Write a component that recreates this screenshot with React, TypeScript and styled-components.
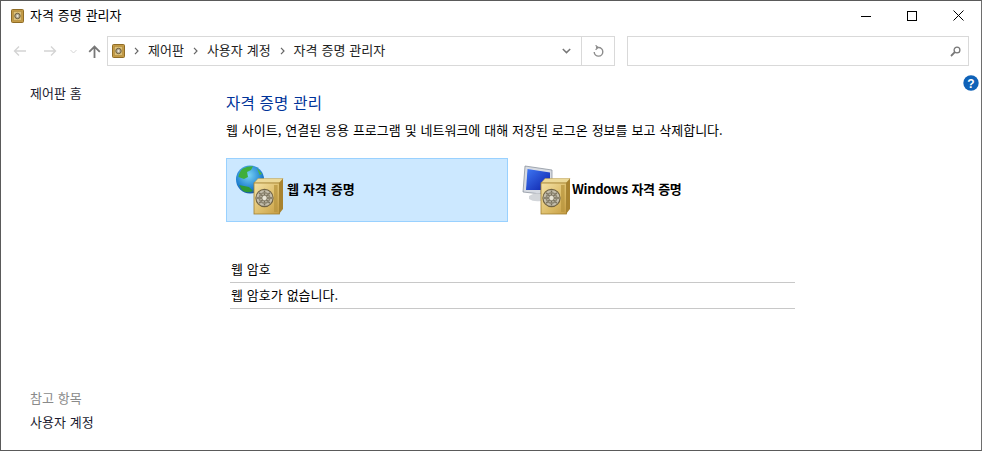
import React from "react";
import styled, { createGlobalStyle } from "styled-components";

const Global = createGlobalStyle`
  html, body { margin: 0; padding: 0; background: #fff; }
  body { font-family: "Noto Sans CJK KR", "Liberation Sans", sans-serif; font-size: 13px; word-spacing: 1px; color: #000; }
`;

const Window = styled.div`
  width: 982px; height: 451px; box-sizing: border-box;
  border: 1px solid #5a5a5a; border-right-color: #6e6e6e;
  display: flex; flex-direction: column; overflow: hidden; background: #fff;
`;
const TitleBar = styled.div`
  height: 29px; display: flex; align-items: center; padding-left: 10px; flex: none;
`;
const TitleText = styled.span`
  margin-left: 6px; line-height: 16px; flex: 1; padding-bottom: 2px;
`;
const CaptionBtn = styled.div`
  width: 46px; height: 29px; display: flex; align-items: center; justify-content: center;
`;
const NavBar = styled.div`
  height: 30px; margin-top: 6px; display: flex; align-items: center; flex: none; padding-left: 4px;
`;
const NavBtn = styled.div<{ $w: number }>`
  width: ${p => p.$w}px; height: 30px; display: flex; align-items: center; justify-content: center; flex: none;
`;
const AddressBox = styled.div`
  width: 508px; height: 30px; box-sizing: border-box;
  border: 1px solid #d9d9d9; display: flex; align-items: center; padding-left: 4px; flex: none;
`;
const Crumbs = styled.div`
  flex: 1; display: flex; align-items: center; color: #222; padding-bottom: 3px;
`;
const Sep = styled.span`
  width: 23px; display: flex; align-items: center; justify-content: center; flex: none; padding-top: 3px;
`;
const RefreshCell = styled.div`
  width: 32px; height: 100%; border-left: 1px solid #d9d9d9; display: flex; align-items: center; justify-content: center; margin-left: 10px;
`;
const SearchBox = styled.div`
  width: 342px; height: 30px; box-sizing: border-box; margin-left: 12px;
  border: 1px solid #d9d9d9; display: flex; align-items: center; justify-content: flex-end; padding-right: 7px; flex: none;
`;
const Body = styled.div`
  flex: 1; display: flex; position: relative; min-height: 0;
`;
const Side = styled.aside`
  width: 225px; flex: none; box-sizing: border-box; padding: 18px 0 19px 29px;
  display: flex; flex-direction: column;
`;
const SideLink = styled.div`
  color: #1a1a2e; line-height: 18px;
`;
const SeeAlso = styled.div`
  margin-top: auto; color: #8a8a8a; line-height: 18px; margin-bottom: 6px;
`;
const Main = styled.main`
  flex: 1; padding-top: 25px; min-width: 0;
`;
const Heading = styled.h1`
  margin: 0; font-size: 15.5px; font-weight: 400; color: #003399; line-height: 22px; letter-spacing: .2px;
`;
const Desc = styled.p`
  margin: 8px 0 0; line-height: 18px;
`;
const Tiles = styled.div`
  display: flex; margin-top: 19px;
`;
const Tile = styled.div<{ $active?: boolean }>`
  width: 282px; height: 64px; box-sizing: border-box; display: flex; align-items: center;
  padding-left: 8px;
  background: ${p => (p.$active ? "#cce8ff" : "transparent")};
  border: 1px solid ${p => (p.$active ? "#99d1ff" : "transparent")};
  font-weight: 700;
`;
const TileLabel = styled.span<{ $tight?: boolean }>`
  line-height: 18px; padding-bottom: 2px;
  letter-spacing: ${p => (p.$tight ? "-.35px" : "0")};
`;
const Section = styled.section`
  width: 565px; margin: 36px 0 0 4px;
`;
const Row = styled.div`
  height: 26px; box-sizing: border-box; border-bottom: 1px solid #c8c8c8; display: flex; align-items: center; padding: 0 0 2px 1px;
`;
const FirstRow = styled(Row)`
  height: 25px; padding-bottom: 4px;
`;
const HelpBadge = styled.div`
  position: absolute; top: 9px; right: 2px; width: 16px; height: 16px;
`;

const Safe = ({ w = 13 }: { w?: number }) => (
  <svg width={w} height={14} viewBox="0 0 13 14" style={{ flex: "none" }}>
    <rect x=".5" y=".5" width="12" height="13" rx="1" fill="#c49a45" stroke="#8f6c26" />
    <rect x="2.5" y="2.5" width="8" height="9" fill="#dcc07a" stroke="#b08d3f" strokeWidth=".6" />
    <circle cx="6.5" cy="7" r="2.7" fill="#b7ae97" stroke="#6b5c3a" />
    <circle cx="6.5" cy="7" r=".9" fill="#f0ead9" />
  </svg>
);

const BigSafe = () => (
  <g>
    <path d="M1 5 L5 0.5 H30 L27 5 Z" fill="#ecd998" stroke="#b99a4c" strokeWidth=".5" />
    <path d="M26 5 L30 .5 V31 L26 36 Z" fill="#a9832f" />
    <rect x="1" y="5" width="25.5" height="31" fill="url(#gold)" stroke="#a07f30" strokeWidth=".8" />
    <rect x="21" y="7" width="3.6" height="27" fill="#b8953f" opacity=".75" />
    <circle cx="11.5" cy="20" r="8.6" fill="#c4bead" stroke="#6f6245" strokeWidth="1.1" />
    <path d="M11.5 12.5V27.5M4 20H19M6.2 14.7L16.8 25.3M16.8 14.7L6.2 25.3" stroke="#77705c" strokeWidth="1.5" />
    <circle cx="11.5" cy="20" r="5.2" fill="none" stroke="#8e8773" strokeWidth="1.6" />
    <circle cx="11.5" cy="20" r="2.7" fill="#e8e4d6" stroke="#77705c" strokeWidth=".8" />
  </g>
);

const Defs = () => (
  <defs>
    <linearGradient id="gold" x1="0" y1="0" x2="1" y2="1">
      <stop offset="0" stopColor="#f4e2a6" />
      <stop offset=".6" stopColor="#dcbc68" />
      <stop offset="1" stopColor="#c59b42" />
    </linearGradient>
    <radialGradient id="sea" cx=".45" cy=".35" r=".75">
      <stop offset="0" stopColor="#7ad4f4" />
      <stop offset=".65" stopColor="#1f7fd0" />
      <stop offset="1" stopColor="#123f86" />
    </radialGradient>
    <linearGradient id="scr" x1="0" y1="0" x2="1" y2="1">
      <stop offset="0" stopColor="#3f78f4" />
      <stop offset="1" stopColor="#0c1fa8" />
    </linearGradient>
  </defs>
);

const WebIcon = () => (
  <svg width="52" height="52" viewBox="0 0 52 52" style={{ flex: "none" }}>
    <Defs />
    <circle cx="15" cy="15.5" r="14" fill="url(#sea)" />
    <path d="M8 4.5 Q13 2 18 2.2 L16 6 L12 8 L13 13 L9 15 L3.5 13 Q4 8 8 4.5 Z" fill="#3fae3a" />
    <path d="M4 21 L14 23 L18 27 Q11 30 7 26 Z" fill="#2f9a35" />
    <path d="M22 4 L27 10 L24.5 11 Z" fill="#4bb544" />
    <g transform="translate(18 14)"><BigSafe /></g>
  </svg>
);

const WinIcon = () => (
  <svg width="55" height="52" viewBox="0 0 55 52" style={{ flex: "none" }}>
    <Defs />
    <path d="M6 28 L8 2 L35 6 V18 H24 V30 Z" fill="#d7dbe2" stroke="#7f8894" strokeWidth=".7" />
    <path d="M9 26 L10.5 5 L33 8.5 V26 Z" fill="url(#scr)" />
    <path d="M12 32 Q18 28 24 30 V37 Q16 38 12 35 Z" fill="#d3d6da" />
    <g transform="translate(23 14)"><BigSafe /></g>
  </svg>
);

const Chevron = () => (
  <Sep><svg width="5" height="8" viewBox="0 0 5 8"><path d="M1 .8L4 4L1 7.2" fill="none" stroke="#666" strokeWidth="1.2" /></svg></Sep>
);

export default function App() {
  return (
    <>
      <Global />
      <Window>
        <TitleBar>
          <Safe />
          <TitleText>자격 증명 관리자</TitleText>
          <CaptionBtn>
            <svg width="10" height="10"><path d="M0 5.5H10" stroke="#000" /></svg>
          </CaptionBtn>
          <CaptionBtn>
            <svg width="10" height="10"><rect x=".5" y=".5" width="9" height="9" fill="none" stroke="#000" /></svg>
          </CaptionBtn>
          <CaptionBtn>
            <svg width="11" height="11"><path d="M.5.5L10.5 10.5M10.5.5L.5 10.5" stroke="#000" /></svg>
          </CaptionBtn>
        </TitleBar>
        <NavBar>
          <NavBtn $w={30}>
            <svg width="14" height="12" viewBox="0 0 14 12"><path d="M13 6H2M6 1.5L1.5 6L6 10.5" fill="none" stroke="#d4d4d4" strokeWidth="1.4" /></svg>
          </NavBtn>
          <NavBtn $w={30}>
            <svg width="14" height="12" viewBox="0 0 14 12"><path d="M1 6H12M8 1.5L12.5 6L8 10.5" fill="none" stroke="#d4d4d4" strokeWidth="1.4" /></svg>
          </NavBtn>
          <NavBtn $w={16}>
            <svg width="7" height="5" viewBox="0 0 7 5"><path d="M.5 1L3.5 4L6.5 1" fill="none" stroke="#d4d4d4" /></svg>
          </NavBtn>
          <NavBtn $w={26}>
            <svg width="13" height="13" viewBox="0 0 13 13"><path d="M6.5 13V2M1.2 6.8L6.5 1.5L11.8 6.8" fill="none" stroke="#777" strokeWidth="1.8" /></svg>
          </NavBtn>
          <AddressBox>
            <Safe />
            <Crumbs>
              <Chevron />
              <span>제어판</span>
              <Chevron />
              <span>사용자 계정</span>
              <Chevron />
              <span>자격 증명 관리자</span>
            </Crumbs>
            <svg width="9" height="6" viewBox="0 0 9 6"><path d="M.8 1L4.5 4.6L8.2 1" fill="none" stroke="#777" strokeWidth="1.5" /></svg>
            <RefreshCell>
              <svg width="11" height="12" viewBox="0 0 11 12"><path d="M3 2.5 H5.5 A4.3 4.3 0 1 1 1.2 7" fill="none" stroke="#8c8c8c" strokeWidth="1.4" /><path d="M2.6 .3 L5 2.5 L2.6 4.7" fill="none" stroke="#8c8c8c" strokeWidth="1.2" /></svg>
            </RefreshCell>
          </AddressBox>
          <SearchBox>
            <svg width="11" height="11" viewBox="0 0 11 11"><circle cx="7" cy="4" r="2.9" fill="none" stroke="#777" strokeWidth="1.3" /><path d="M4.8 6.2L1 10" stroke="#777" strokeWidth="1.8" /></svg>
          </SearchBox>
        </NavBar>
        <Body>
          <Side>
            <SideLink>제어판 홈</SideLink>
            <SeeAlso>참고 항목</SeeAlso>
            <SideLink>사용자 계정</SideLink>
          </Side>
          <Main>
            <Heading>자격 증명 관리</Heading>
            <Desc>웹 사이트, 연결된 응용 프로그램 및 네트워크에 대해 저장된 로그온 정보를 보고 삭제합니다.</Desc>
            <Tiles>
              <Tile $active>
                <WebIcon />
                <TileLabel>웹 자격 증명</TileLabel>
              </Tile>
              <Tile>
                <WinIcon />
                <TileLabel $tight>Windows 자격 증명</TileLabel>
              </Tile>
            </Tiles>
            <Section>
              <FirstRow>웹 암호</FirstRow>
              <Row>웹 암호가 없습니다.</Row>
            </Section>
          </Main>
          <HelpBadge>
            <svg width="16" height="16" viewBox="0 0 16 16">
              <circle cx="8" cy="8" r="7.7" fill="#0f62b8" />
              <text x="8" y="12.5" textAnchor="middle" fontSize="12" fontWeight="700" fill="#fff" fontFamily="Liberation Sans">?</text>
            </svg>
          </HelpBadge>
        </Body>
      </Window>
    </>
  );
}
